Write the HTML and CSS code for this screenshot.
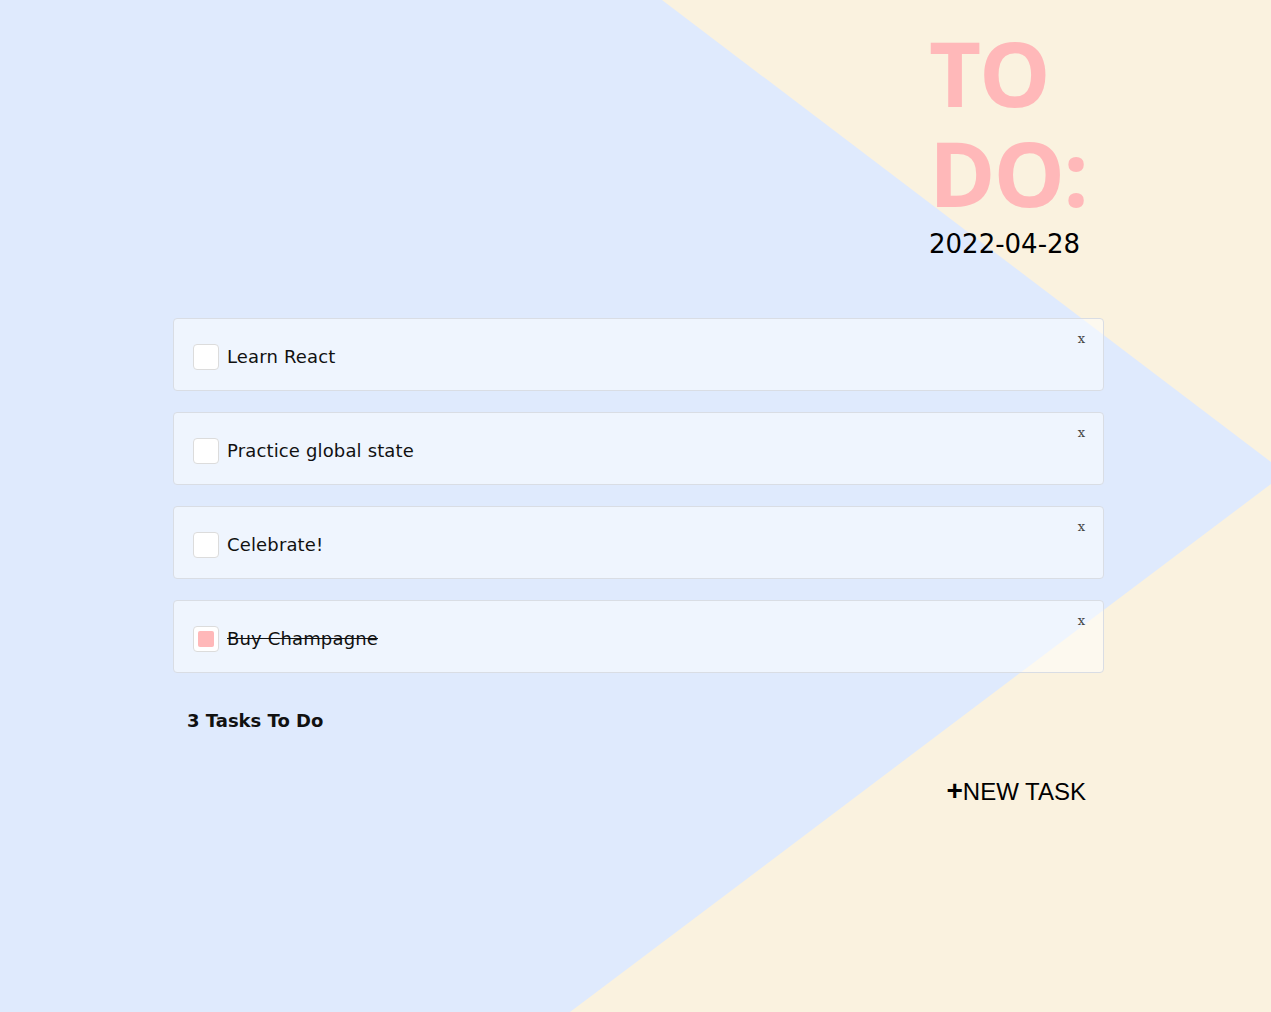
FILE: index.html
```html
<!DOCTYPE html>
<html lang="en">
<head>
<meta charset="utf-8">
<title>To Do</title>
<link rel="stylesheet" href="styles.css">
</head>
<body>
<div class="backdrop"></div>
<main class="app">
  <header class="head">
    <h1 class="title">TO<br>DO:</h1>
    <div class="date">2022-04-28</div>
  </header>
  <ul class="list">
    <li class="card"><span class="check"></span><span class="label">Learn React</span><button class="remove">x</button></li>
    <li class="card"><span class="check"></span><span class="label">Practice global state</span><button class="remove">x</button></li>
    <li class="card"><span class="check"></span><span class="label">Celebrate!</span><button class="remove">x</button></li>
    <li class="card done"><span class="check"><span class="tick"></span></span><span class="label">Buy Champagne</span><button class="remove">x</button></li>
  </ul>
  <div class="count">3 Tasks To Do</div>
  <div class="actions"><button class="new"><b>+</b>NEW TASK</button></div>
</main>
</body>
</html>
```
FILE: styles.css
```css
html, body {
  margin: 0;
  padding: 0;
}
body {
  background: #faf2df;
  font-family: "DejaVu Sans", "Open Sans", sans-serif;
  color: #111;
  min-height: 1012px;
  position: relative;
  overflow: hidden;
}
.backdrop {
  position: absolute;
  inset: 0;
  background: #dfeafd;
  clip-path: polygon(0 0, 662px 0, 1271px 462px, 1271px 484px, 570px 1012px, 0 1012px);
  z-index: 0;
}
.app {
  position: relative;
  z-index: 1;
  width: 931px;
  margin-left: 173px;
  display: flex;
  flex-direction: column;
}
.head {
  margin-left: 756px;
  padding-top: 22px;
}
.title {
  margin: 0;
  font-family: "Open Sans", sans-serif;
  font-size: 90px;
  line-height: 100px;
  font-weight: 700;
  color: #ffb8b9;
  letter-spacing: -2px;
}
.date {
  font-size: 26px;
  line-height: 30px;
  margin-top: 7px;
  color: #000;
}
.list {
  list-style: none;
  margin: 59px 0 0;
  padding: 0;
  display: flex;
  flex-direction: column;
  gap: 21px;
}
.card {
  position: relative;
  height: 73px;
  box-sizing: border-box;
  background: rgba(255, 255, 255, 0.5);
  border: 1px solid #d9dde4;
  border-radius: 4px;
  display: flex;
  align-items: center;
  padding: 4px 0 0 19px;
  gap: 8px;
}
.check {
  width: 26px;
  height: 26px;
  box-sizing: border-box;
  background: #fff;
  border: 1px solid #dcdcdc;
  border-radius: 4px;
  display: flex;
  align-items: center;
  justify-content: center;
}
.tick {
  width: 16px;
  height: 16px;
  background: #ffb8b9;
  border-radius: 2px;
}
.label {
  font-size: 18px;
  letter-spacing: 0.15px;
  color: #111;
}
.done .label {
  text-decoration: line-through;
}
.remove {
  position: absolute;
  top: 13px;
  right: 18px;
  background: none;
  border: 0;
  padding: 0;
  font-family: "DejaVu Serif", serif;
  font-size: 13px;
  line-height: 1;
  color: #444;
}
.count {
  margin-top: 37px;
  padding-left: 14px;
  font-size: 18px;
  font-weight: 700;
  color: #111;
}
.actions {
  display: flex;
  justify-content: flex-end;
  padding-right: 18px;
  margin-top: 46px;
}
.new {
  background: none;
  border: 0;
  padding: 0;
  font-family: "Liberation Sans", Arial, sans-serif;
  font-size: 24px;
  color: #000;
}
.new b {
  font-size: 28px;
  line-height: 1;
}
```
